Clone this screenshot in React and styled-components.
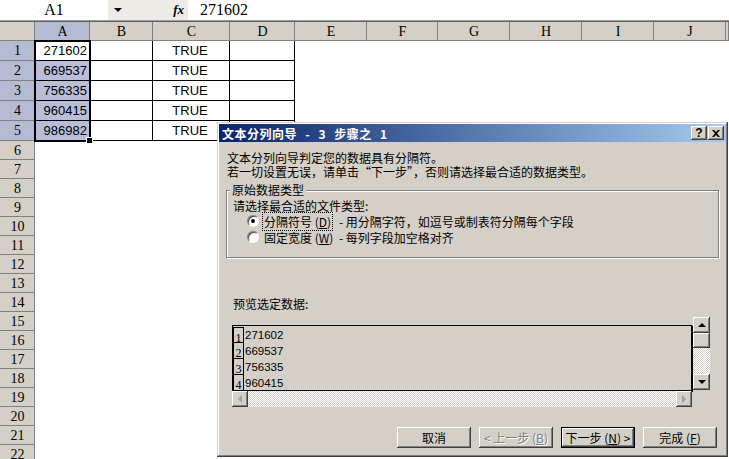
import React from 'react';
import styled, { createGlobalStyle, css } from 'styled-components';

const GlobalStyle = createGlobalStyle`
  html, body { margin: 0; padding: 0; background: #fff; overflow: hidden; }
  #root { width: 729px; height: 459px; }
`;

const CJK = `"Noto Sans CJK SC", "DejaVu Sans", sans-serif`;
const SERIF = `"Liberation Serif", "Noto Sans CJK SC", serif`;

const columns = [
  { id: 'A', w: 55 }, { id: 'B', w: 63 }, { id: 'C', w: 77 }, { id: 'D', w: 65 },
  { id: 'E', w: 72 }, { id: 'F', w: 71 }, { id: 'G', w: 72 }, { id: 'H', w: 72 },
  { id: 'I', w: 72 }, { id: 'J', w: 72 },
];
const template = `35px ${columns.map((c) => c.w + 'px').join(' ')} 1fr`;
const boxed = ['A', 'B', 'C', 'D'];

const values = ['271602', '669537', '756335', '960415', '986982'];
const rowCount = 22;

const raised = css`
  background: #d4d0c8;
  box-shadow: inset -1px -1px #404040, inset 1px 1px #fff, inset -2px -2px #808080, inset 2px 2px #d4d0c8;
`;

const Screen = styled.div`
  position: relative;
  width: 729px;
  height: 459px;
  overflow: hidden;
  background: #fff;
`;

/* formula bar */
const FormulaBar = styled.div`
  display: flex;
  height: 20px;
  background: #ecebe6;
  border-bottom: 1px solid #a0a0a0;
`;
const NameBox = styled.div`
  width: 108px;
  background: #fff;
  font: 16px ${SERIF};
  line-height: 20px;
  text-align: center;
`;
const NameArrow = styled.div`
  width: 20px;
  display: flex;
  align-items: center;
  justify-content: center;
`;
const Fx = styled.div`
  width: 60px;
  display: flex;
  align-items: center;
  justify-content: flex-end;
  padding-right: 4px;
  box-sizing: border-box;
  font: italic bold 13px ${SERIF};
`;
const FormulaInput = styled.div`
  flex: 1;
  background: #fff;
  font: 16px ${SERIF};
  line-height: 20px;
  padding-left: 12px;
`;

/* sheet */
const HeaderRow = styled.div`
  display: grid;
  grid-template-columns: ${template};
  height: 19px;
  border-top: 1px solid #606060;
`;
const HeadCell = styled.div`
  background: ${(p) => (p.$sel ? '#b4bbd3' : '#d4d0c8')};
  box-shadow: inset -1px -1px 0 #808080;
  font: 14px ${SERIF};
  line-height: 19px;
  text-align: center;
`;
const SheetBody = styled.div`
  position: relative;
`;
const SheetRow = styled.div`
  display: grid;
  grid-template-columns: ${template};
  grid-template-rows: ${(p) => p.$h}px;
  height: ${(p) => p.$h}px;
`;
const RowHead = styled(HeadCell)`
  line-height: ${(p) => p.$h}px;
`;
const Cell = styled.div`
  height: 100%;
  font: 13px "Liberation Sans", Arial, sans-serif;
  line-height: 20px;
  text-align: ${(p) => p.$align || 'left'};
  padding-right: 3px;
  background: ${(p) => (p.$sel ? '#b9bed8' : '#fff')};
  box-shadow: ${(p) => (p.$border ? 'inset -1px -1px 0 #000' : 'none')};
`;
const Selection = styled.div`
  position: absolute;
  left: 34px;
  top: -1px;
  width: 57px;
  height: 102px;
  border: 2px solid #000;
  box-sizing: border-box;
  pointer-events: none;
  &::after {
    content: '';
    position: absolute;
    right: -4px;
    bottom: -4px;
    width: 5px;
    height: 5px;
    background: #000;
    border: 1px solid #fff;
  }
`;

/* dialog */
const Dialog = styled.div`
  position: absolute;
  left: 217px;
  top: 122px;
  width: 511px;
  height: 335px;
  box-sizing: border-box;
  padding: 2px;
  background: #d4d0c8;
  box-shadow: inset -1px -1px #404040, inset 1px 1px #d4d0c8, inset -2px -2px #808080, inset 2px 2px #fff;
  display: flex;
  flex-direction: column;
  font: 12px ${CJK};
  color: #000;
`;
const TitleBar = styled.div`
  height: 18px;
  background: linear-gradient(to right, #0a246a, #a6caf0);
  display: flex;
  align-items: center;
  justify-content: space-between;
  padding: 0 2px 0 3px;
`;
const TitleText = styled.div`
  color: #fff;
  font: bold 12px ${CJK};
  letter-spacing: 0.5px;
  word-spacing: 5px;
  white-space: pre;
`;
const TitleButtons = styled.div`
  display: flex;
  gap: 1px;
`;
const TitleButton = styled.div`
  ${raised};
  width: 16px;
  height: 14px;
  display: flex;
  align-items: center;
  justify-content: center;
  font: bold 12px "Liberation Sans", sans-serif;
`;
const Content = styled.div`
  flex: 1;
  display: flex;
  flex-direction: column;
  padding: 9px 7px 0 8px;
`;
const Line = styled.div`
  line-height: 14px;
  height: 14px;
  white-space: nowrap;
`;
const Group = styled.div`
  position: relative;
  margin: 11px 0 0 -1px;
  height: 68px;
  box-sizing: border-box;
  border: 1px solid #808080;
  box-shadow: 1px 1px #fff, inset 1px 1px #fff;
  padding: 8px 0 0 6px;
`;
const Legend = styled.span`
  position: absolute;
  left: 3px;
  top: -8px;
  padding: 0 2px;
  background: #d4d0c8;
  line-height: 14px;
`;
const RadioRow = styled.div`
  display: flex;
  align-items: center;
  height: 16px;
  padding-left: 14px;
  white-space: nowrap;
`;
const Radio = styled.span`
  position: relative;
  flex-shrink: 0;
  width: 10px;
  height: 10px;
  border-radius: 50%;
  background: #fff;
  border: 1px solid #808080;
  border-right-color: #fff;
  border-bottom-color: #fff;
  box-shadow: inset 1px 1px #404040;
  margin-right: 4px;
  ${(p) => p.$on && css`
    &::after {
      content: '';
      position: absolute;
      left: 3px;
      top: 3px;
      width: 4px;
      height: 4px;
      border-radius: 50%;
      background: #000;
    }
  `}
`;
const RadioLabel = styled.span`
  flex: 0 0 76px;
  line-height: 13px;
  span {
    outline: ${(p) => (p.$focus ? '1px dotted #000' : 'none')};
    outline-offset: 0;
    padding: 0 1px;
  }
`;
const PreviewLabel = styled(Line)`
  margin: 39px 0 0 6px;
`;
const PreviewWrap = styled.div`
  margin: 6px 0 0 5px;
  display: grid;
  grid-template-columns: 460px 17px;
  grid-template-rows: 8px 66px 16px;
  column-gap: 1px;
`;
const List = styled.div`
  grid-column: 1;
  grid-row: 2;
  border: 1px solid #000;
  box-shadow: 1px 1px 0 #000;
  padding-top: 1px;
  overflow: hidden;
`;
const ListRow = styled.div`
  display: flex;
  height: 16px;
  align-items: stretch;
`;
const RowNum = styled.div`
  width: 11px;
  border: 1px solid #000;
  border-top-width: ${(p) => (p.$first ? 1 : 0)}px;
  font: 12px ${SERIF};
  line-height: 20px;
  text-align: center;
  box-sizing: border-box;
  overflow: hidden;
`;
const RowVal = styled.div`
  font: 11.5px "Liberation Sans", sans-serif;
  line-height: 16px;
  padding-left: 1px;
`;
const checker = css`
  background: repeating-conic-gradient(#fff 0 25%, #d4d0c8 0 50%) 0 0 / 2px 2px;
`;
const VScroll = styled.div`
  grid-column: 2;
  grid-row: 1 / 3;
  display: flex;
  flex-direction: column;
  ${checker};
  margin-bottom: 1px;
`;
const HScroll = styled.div`
  grid-column: 1;
  grid-row: 3;
  display: flex;
  justify-content: space-between;
  ${checker};
`;
const ScrollBtn = styled.div`
  ${raised};
  width: ${(p) => p.$w || 17}px;
  height: ${(p) => p.$h || 16}px;
  display: flex;
  align-items: center;
  justify-content: center;
  flex-shrink: 0;
`;
const Spacer = styled.div`
  flex: 1;
`;
const ButtonRow = styled.div`
  display: flex;
  justify-content: flex-end;
  gap: 8px;
  margin: 20px 2px 0 0;
`;
const PushButton = styled.div`
  width: 74px;
  height: 21px;
  box-sizing: border-box;
  display: flex;
  align-items: center;
  justify-content: center;
  line-height: 14px;
  white-space: pre;
  ${raised};
  color: ${(p) => (p.$disabled ? '#808080' : '#000')};
  text-shadow: ${(p) => (p.$disabled ? '1px 1px #fff' : 'none')};
  ${(p) => p.$default && css`
    box-shadow: inset 0 0 0 1px #000, inset -2px -2px #404040, inset 2px 2px #fff, inset -3px -3px #808080;
  `}
`;

const Arrow = ({ dir, color = '#000' }) => {
  const pts = {
    up: '0,4 4,0 8,4',
    down: '0,0 8,0 4,4',
    left: '4,0 4,8 0,4',
    right: '0,0 0,8 4,4',
  }[dir];
  const vertical = dir === 'up' || dir === 'down';
  return (
    <svg width={vertical ? 8 : 4} height={vertical ? 4 : 8} viewBox={vertical ? '0 0 8 4' : '0 0 4 8'}>
      <polygon points={pts} fill={color} />
    </svg>
  );
};

const Close = () => (
  <svg width="8" height="7" viewBox="0 0 8 7">
    <path d="M0 0 L2 0 L4 2 L6 0 L8 0 L5 3.5 L8 7 L6 7 L4 5 L2 7 L0 7 L3 3.5 Z" fill="#000" />
  </svg>
);

function Sheet() {
  return (
    <>
      <FormulaBar>
        <NameBox>A1</NameBox>
        <NameArrow><Arrow dir="down" /></NameArrow>
        <Fx>fx</Fx>
        <FormulaInput>271602</FormulaInput>
      </FormulaBar>
      <HeaderRow>
        <HeadCell />
        {columns.map((c) => (
          <HeadCell key={c.id} $sel={c.id === 'A'}>{c.id}</HeadCell>
        ))}
        <HeadCell />
      </HeaderRow>
      <SheetBody>
        {Array.from({ length: rowCount }, (_, i) => {
          const top = i < 5;
          const h = top ? 20 : 19;
          return (
            <SheetRow key={i} $h={h}>
              <RowHead $h={h} $sel={top}>{i + 1}</RowHead>
              {columns.map((c) => (
                <Cell
                  key={c.id}
                  $border={top && boxed.includes(c.id)}
                  $sel={top && c.id === 'A' && i > 0}
                  $align={c.id === 'A' ? 'right' : 'center'}
                >
                  {top && c.id === 'A' ? values[i] : ''}
                  {top && c.id === 'C' ? 'TRUE' : ''}
                </Cell>
              ))}
              <Cell />
            </SheetRow>
          );
        })}
        <Selection />
      </SheetBody>
    </>
  );
}

function WizardDialog() {
  return (
    <Dialog>
      <TitleBar>
        <TitleText>文本分列向导 - 3 步骤之 1</TitleText>
        <TitleButtons>
          <TitleButton>?</TitleButton>
          <TitleButton><Close /></TitleButton>
        </TitleButtons>
      </TitleBar>
      <Content>
        <Line>文本分列向导判定您的数据具有分隔符。</Line>
        <Line>若一切设置无误，请单击“下一步”，否则请选择最合适的数据类型。</Line>
        <Group>
          <Legend>原始数据类型</Legend>
          <Line>请选择最合适的文件类型:</Line>
          <RadioRow>
            <Radio $on />
            <RadioLabel $focus><span>分隔符号 (<u>D</u>)</span></RadioLabel>
            <span>- 用分隔字符，如逗号或制表符分隔每个字段</span>
          </RadioRow>
          <RadioRow>
            <Radio />
            <RadioLabel><span>固定宽度 (<u>W</u>)</span></RadioLabel>
            <span>- 每列字段加空格对齐</span>
          </RadioRow>
        </Group>
        <PreviewLabel>预览选定数据:</PreviewLabel>
        <PreviewWrap>
          <List>
            {values.slice(0, 4).map((v, i) => (
              <ListRow key={v}>
                <RowNum $first={i === 0}>{i + 1}</RowNum>
                <RowVal>{v}</RowVal>
              </ListRow>
            ))}
          </List>
          <VScroll>
            <ScrollBtn><Arrow dir="up" /></ScrollBtn>
            <ScrollBtn $h={15} />
            <Spacer />
            <ScrollBtn><Arrow dir="down" /></ScrollBtn>
          </VScroll>
          <HScroll>
            <ScrollBtn $w={16}><Arrow dir="left" color="#a0a0a0" /></ScrollBtn>
            <ScrollBtn $w={16}><Arrow dir="right" color="#a0a0a0" /></ScrollBtn>
          </HScroll>
        </PreviewWrap>
        <ButtonRow>
          <PushButton>取消</PushButton>
          <PushButton $disabled>&lt; 上一步 (<u>B</u>)</PushButton>
          <PushButton $default>下一步 (<u>N</u>) &gt;</PushButton>
          <PushButton>完成 (<u>F</u>)</PushButton>
        </ButtonRow>
      </Content>
    </Dialog>
  );
}

export default function App() {
  return (
    <Screen>
      <GlobalStyle />
      <Sheet />
      <WizardDialog />
    </Screen>
  );
}
